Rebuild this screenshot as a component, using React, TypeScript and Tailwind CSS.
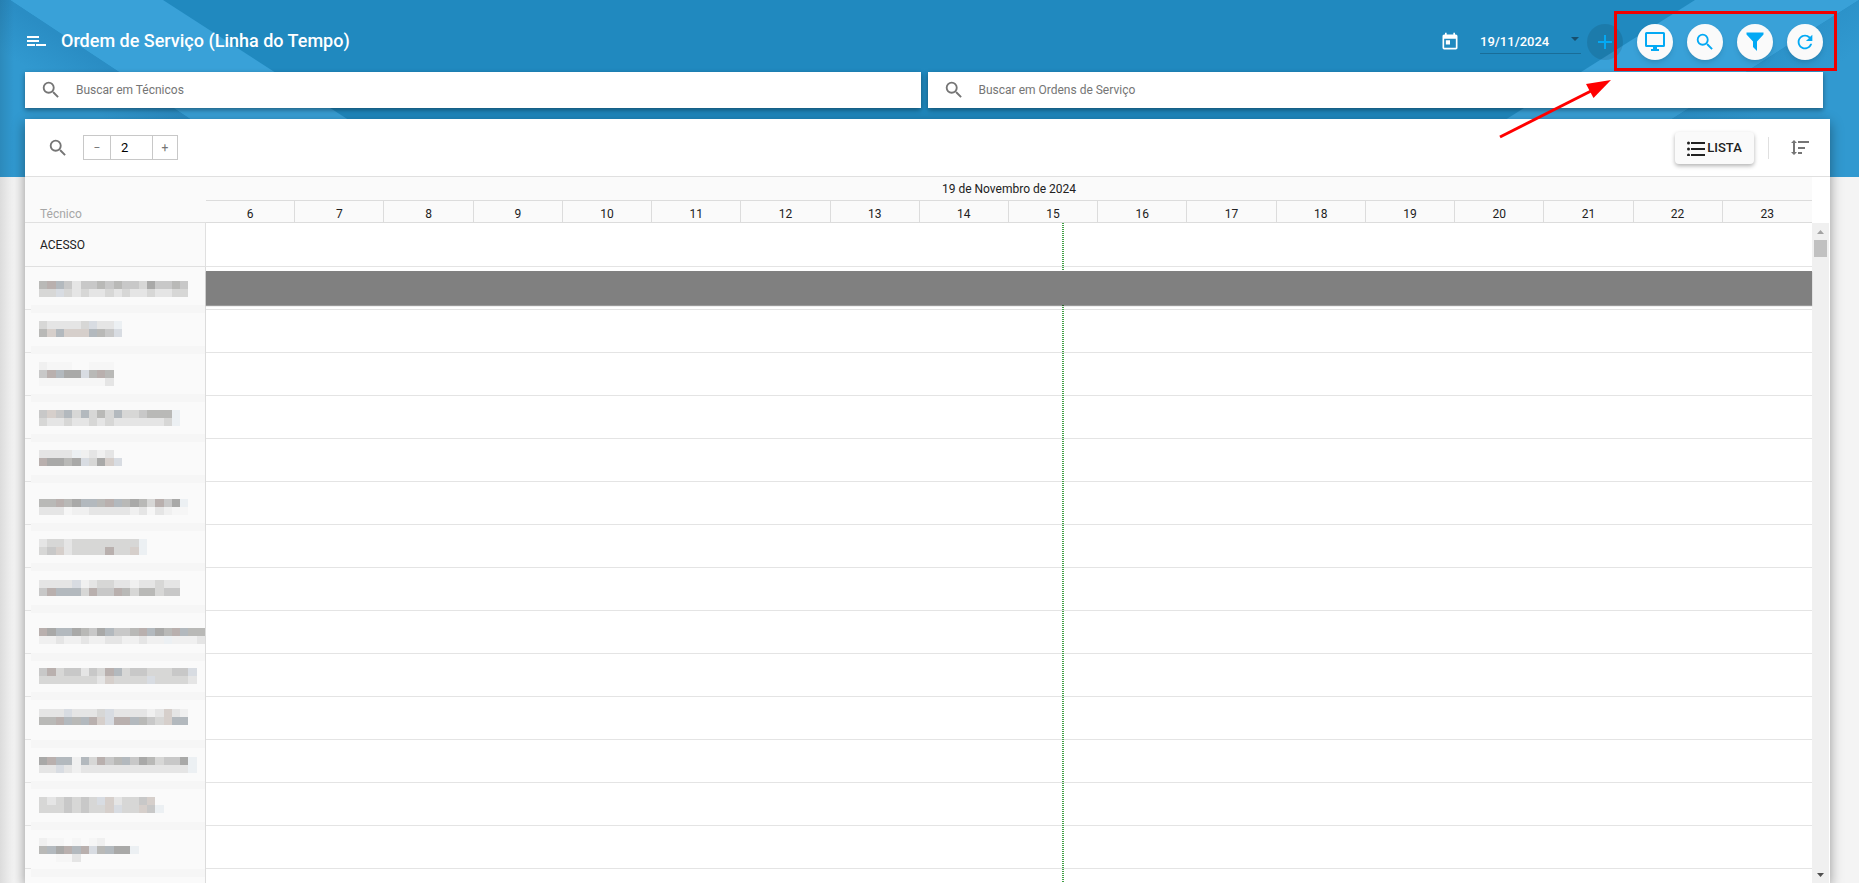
import { MdAdd, MdRefresh, MdSearch, MdToday } from 'react-icons/md';
import type { ReactNode } from 'react';

type Mosaic = {
  y: number;
  band: number;
  rows: string[];
};

const HOURS = Array.from({ length: 18 }, (_, i) => i + 6);

// One letter per censored block
const SHADES: Record<string, string> = {
  a: '#a9a9a8',
  b: '#b9b9b7',
  c: '#c8c8c8',
  d: '#d7d7d6',
  e: '#e5e5e5',
  f: '#f0f0f0',
  w: '#f6f6f6',
  r: '#b9b0ae',
  R: '#d6cfcb',
  u: '#b3b9be',
  U: '#d8dce2',
  L: '#ecf0f3',
};

const TECHNICIANS: Mosaic[] = [
  { y: 14, band: 38, rows: ['bruceccbcbccdaccbc', 'ddUdedeededeedeedd'] },
  { y: 11, band: 36, rows: ['deeeedUeeL', 'bRuRRRubcU'] },
  { y: 9, band: 41, rows: ['fwww..www', 'cruaaUbrb', 'wwwwwwwwe'] },
  { y: 14, band: 38, rows: ['cRcududbduddcbbbL', 'deedeededeeeeeedL'] },
  { y: 11, band: 36, rows: ['eeeeLfefe.', 'raabaUdaRU'] },
  { y: 17, band: 41, rows: ['bbrbauubrubabdrcaL', 'eeewffeeeeefewefww'] },
  { y: 14, band: 38, rows: ['eddeddddddddL', 'dcReddddrddRL'] },
  { y: 12, band: 37, rows: ['eeeeUfeddeefeedee', 'cruuudrccrbdbbdcc'] },
  { y: 17, band: 42, rows: ['rauuabcauccbruabrubb', 'ffeffeffeeffeffLfffe'] },
  { y: 14, band: 38, rows: ['crdccecdrudccdddccU', 'dddddddeRddddUdddde'] },
  { y: 12, band: 43, rows: ['eeeUeeedUeeeefeRef', 'bbruburRUrrubcdRuu'] },
  { y: 17, band: 41, rows: ['aruufudrcbucabdccaL', 'eeUefeeeeeeeeeeeeeL'] },
  { y: 14, band: 39, rows: ['dedcdcdUReddcR', 'dddcdcddRUddRcL'] },
  { y: 12, band: 43, rows: ['fww.w.wf', 'buarurUbuaaL', '..wwe'] },
];

function CensoredName({ mosaic }: { mosaic: Mosaic }) {
  return (
    <svg className="block w-[174px] h-[43px] overflow-visible" viewBox="0 0 174 43" shapeRendering="crispEdges" aria-hidden="true">
      <rect x="0" y={mosaic.band} width="174" height="8" fill="#f6f6f6" />
      {mosaic.rows.map((row, r) =>
        row.split('').map((shade, c) =>
          SHADES[shade] ? (
            <rect
              key={`${r}-${c}`}
              x={8 + c * 8.3}
              y={mosaic.y + r * 8}
              width={Math.min(8.3, 166 - c * 8.3)}
              height="8"
              fill={SHADES[shade]}
            />
          ) : null
        )
      )}
    </svg>
  );
}

function HeaderArt() {
  return (
    <>
      <svg className="absolute left-0 top-0 w-[540px] h-full" viewBox="0 0 540 177" aria-hidden="true">
        <defs>
          <linearGradient id="fold" gradientUnits="userSpaceOnUse" x1="100" y1="63" x2="76" y2="100">
            <stop offset="0" stopColor="#2a8dc4" />
            <stop offset="1" stopColor="#3199d0" />
          </linearGradient>
        </defs>
        <path d="M10 0H163L437 177H278Z" fill="#39a1d8" />
        <path d="M0 0H10L278 177H0Z" fill="url(#fold)" />
      </svg>
      <svg className="absolute right-0 top-0 w-[540px] h-full" viewBox="0 0 540 177" aria-hidden="true">
        <defs>
          <linearGradient id="foldRight" gradientUnits="userSpaceOnUse" x1="440" y1="63" x2="464" y2="100">
            <stop offset="0" stopColor="#2c92c9" />
            <stop offset="1" stopColor="#3199d0" />
          </linearGradient>
        </defs>
        <path d="M540 0H376L96 177H262Z" fill="#39a1d8" />
        <path d="M540 0L262 177H540Z" fill="url(#foldRight)" />
      </svg>
    </>
  );
}

function RoundButton({ label, children }: { label: string; children: ReactNode }) {
  return (
    <button
      type="button"
      aria-label={label}
      className="w-9 h-9 rounded-full bg-[#fafafa] text-[#03a9f4] shadow-md flex items-center justify-center cursor-pointer"
    >
      {children}
    </button>
  );
}

function SearchBox({ id, label }: { id: string; label: string }) {
  return (
    <div className="flex-1 h-9 bg-white flex items-center pl-[15px] shadow-[0_2px_5px_rgba(0,0,0,0.4)]">
      <label htmlFor={id} aria-label={label}>
        <MdSearch className="size-[22px] text-[#757575]" />
      </label>
      <input
        id={id}
        type="text"
        placeholder={label}
        className="flex-1 ml-[14px] h-full text-xs text-gray-800 placeholder:text-[#757575] outline-none"
      />
    </div>
  );
}

function Header() {
  return (
    <header className="relative h-[72px] shrink-0 pl-[25px] pr-9 flex items-center text-white">
      <svg className="w-[22px] h-5 mt-2.5 mr-[14px]" viewBox="0 0 22 20" fill="currentColor" aria-hidden="true">
        <path d="M2 5h12v2H2zM2 9h12v2H2zM2 13h8v2H2zM11 13h10v2H11z" />
      </svg>
      <h1 className="mt-2.5 text-lg font-medium">Ordem de Serviço (Linha do Tempo)</h1>
      <div className="ml-auto mt-3 flex items-center">
        <MdToday className="size-5 mr-5" />
        <button type="button" className="w-[101px] h-6 flex items-center justify-between border-b border-black/20 text-[13px] font-medium">
          19/11/2024
          <svg className="w-3 h-4" viewBox="0 0 12 16" aria-hidden="true"><path d="M2 3h8L6 7z" fill="#174f6d" /></svg>
        </button>
        <button type="button" aria-label="Adicionar" className="w-9 h-9 ml-1.5 rounded-full bg-black/10 text-[#03a9f4] flex items-center justify-center">
          <MdAdd className="size-6" />
        </button>
        <div className="flex gap-[14px] ml-[14px]">
          <RoundButton label="Monitor">
            <svg className="size-5" viewBox="0 0 20 20" fill="currentColor">
              <path fillRule="evenodd" d="M1.500 0h17A1.500 1.500 0 0 1 20 1.500v12a1.500 1.500 0 0 1-1.500 1.500H12v2h2v2H6v-2h2v-2H1.500A1.500 1.500 0 0 1 0 13.500v-12A1.500 1.500 0 0 1 1.500 0zM2 2v11h16V2z" />
            </svg>
          </RoundButton>
          <RoundButton label="Buscar"><MdSearch className="size-[22px]" /></RoundButton>
          <RoundButton label="Filtrar">
            <svg className="size-5" viewBox="0 0 20 20" fill="currentColor">
              <path d="M1.500 0.500h17v2L12 9.500v9.500l-4-4V9.500L1.500 2.500z" />
            </svg>
          </RoundButton>
          <RoundButton label="Atualizar"><MdRefresh className="size-[22px]" /></RoundButton>
        </div>
      </div>
    </header>
  );
}

function Toolbar() {
  return (
    <div className="h-[57px] shrink-0 flex items-center pl-[22px] pr-5">
      <MdSearch className="size-[22px] text-[#757575] mr-[14px]" />
      <div className="h-[25px] flex border border-[#c8c8c8] text-xs text-[#757575]">
        <button type="button" aria-label="Diminuir" className="w-[26px]">−</button>
        <input aria-label="Escala" defaultValue="2" className="w-[43px] border-x border-[#c8c8c8] pl-[10px] text-[13px] text-black outline-none" />
        <button type="button" aria-label="Aumentar" className="w-6">+</button>
      </div>
      <button type="button" className="ml-auto h-8 w-[79px] rounded-sm bg-[#fafafa] shadow-[0_2px_4px_rgba(0,0,0,0.3)] flex items-center justify-center gap-0.5 text-[13px] font-medium text-[#212121]">
        <svg className="w-[18px] h-4" viewBox="0 0 18 16" fill="currentColor" aria-hidden="true">
          <circle cx="1.500" cy="3" r="1.500" />
          <circle cx="1.500" cy="9" r="1.500" />
          <circle cx="1.500" cy="15" r="1.500" />
          <path d="M4 2h14v2H4zM4 8h14v2H4zM4 14h14v2H4z" />
        </svg>
        LISTA
      </button>
      <div className="w-px h-[22px] bg-[#e0e0e0] mx-[14px]" />
      <button type="button" aria-label="Ordenar" className="ml-[7px] text-[#757575]">
        <svg className="w-5 h-5" viewBox="0 0 20 20" fill="currentColor">
          <path d="M4 2L1 5h2v9H1l3 3 3-3H5V5h2zM8 3h11v2H8zM8 9h7v2H8zM8 14h4v2H8z" />
        </svg>
      </button>
    </div>
  );
}

function Timeline() {
  return (
    <div className="relative flex-1 min-w-0">
      <table className="w-full table-fixed border-separate border-spacing-0 text-xs text-[#212121]">
        <colgroup>
          <col className="w-[181px]" />
          {HOURS.map((hour) => <col key={hour} />)}
        </colgroup>
        <thead className="bg-[#fafafa]">
          <tr className="h-6">
            <th rowSpan={2} className="border-t border-b border-[#e0e0e0] pl-[15px] p-0 text-left align-bottom font-normal text-[#a6a6a6]">Técnico</th>
            <th colSpan={18} className="border-t border-[#e0e0e0] p-0 font-normal">19 de Novembro de 2024</th>
          </tr>
          <tr className="h-[23px]">
            {HOURS.map((hour) => (
              <th key={hour} className="border-t border-b border-r last:border-r-0 border-[#dcdcdc] p-0 pt-1 font-normal leading-4">{hour}</th>
            ))}
          </tr>
        </thead>
        <tbody>
          <tr>
            <td className="h-11 bg-[#fafafa] border-b border-r border-[#e0e0e0] pl-[15px]">ACESSO</td>
            <td colSpan={18} className="border-b border-[#e4e4e4]" />
          </tr>
          {TECHNICIANS.map((mosaic, i) => (
            <tr key={i}>
              <td className="h-[43px] bg-[#fafafa] border-r border-[#dcdcdc] p-0">
                <div className="flex">
                  <div className="w-1.5 h-[43px] border-b border-[#e4e4e4]" />
                  <CensoredName mosaic={mosaic} />
                </div>
              </td>
              <td colSpan={18} className="border-b border-[#e4e4e4] p-0 align-top">
                {i === 0 && <div className="relative z-10 mt-1 h-[34px] bg-[#808080] shadow-[0_1px_1px_rgba(0,0,0,0.4)]" />}
              </td>
            </tr>
          ))}
          <tr>
            <td className="h-[43px] bg-[#fafafa] border-r border-[#dcdcdc]" />
            <td colSpan={18} />
          </tr>
        </tbody>
      </table>
      {/* current time */}
      <div className="absolute top-[47px] bottom-0 left-[181px] right-0 pointer-events-none">
        <div className="absolute inset-y-0 left-[53.3%] w-0.5 bg-[repeating-linear-gradient(to_bottom,#43a047_0_1px,transparent_1px_2px)]" />
      </div>
    </div>
  );
}

function ScrollBar() {
  return (
    <div className="w-[18px] pt-[46px] flex flex-col border-t border-[#e0e0e0] pr-px">
      <div className="flex-1 bg-[#f0f0f0] flex flex-col items-center">
        <svg className="w-[17px] h-[17px]" viewBox="0 0 17 17" aria-hidden="true"><path d="M5 11h7L8.500 7z" fill="#a3a3a3" /></svg>
        <div className="w-[13px] h-[17px] bg-[#c1c1c1]" />
        <svg className="w-[17px] h-[17px] mt-auto" viewBox="0 0 17 17" aria-hidden="true"><path d="M5 7h7l-3.500 4z" fill="#505050" /></svg>
      </div>
    </div>
  );
}

// Red frame and arrow pointing at the action buttons
function Highlight() {
  return (
    <svg className="absolute right-0 top-0 z-20 w-[380px] h-[150px] pointer-events-none" viewBox="0 0 380 150" aria-hidden="true">
      <rect x="136.500" y="12.500" width="220" height="57" fill="none" stroke="#f00000" strokeWidth="3" />
      <path d="M21 137L114 90" stroke="#f00" strokeWidth="3" />
      <path d="M132 80L107 84L114.500 98Z" fill="#f00" />
    </svg>
  );
}

export default function App() {
  return (
    <div className="relative h-screen overflow-hidden flex flex-col bg-[#f4f4f4] font-[Roboto,sans-serif]">
      <div className="absolute inset-x-0 top-0 h-[177px] overflow-hidden bg-[#2089bf]">
        <HeaderArt />
      </div>
      <div className="absolute inset-y-0 left-0 w-3.5 bg-linear-to-r from-black/10 to-transparent" />
      <Header />
      <div className="relative shrink-0 flex gap-[7px] pl-[25px] pr-9">
        <SearchBox id="busca-tecnicos" label="Buscar em Técnicos" />
        <SearchBox id="busca-ordens" label="Buscar em Ordens de Serviço" />
      </div>
      <main className="relative mt-[11px] ml-[25px] mr-[29px] flex-1 min-h-0 flex flex-col bg-white shadow-[0_4px_12px_rgba(0,0,0,0.4)]">
        <Toolbar />
        <div className="flex-1 min-h-0 flex">
          <Timeline />
          <ScrollBar />
        </div>
      </main>
      <Highlight />
    </div>
  );
}
